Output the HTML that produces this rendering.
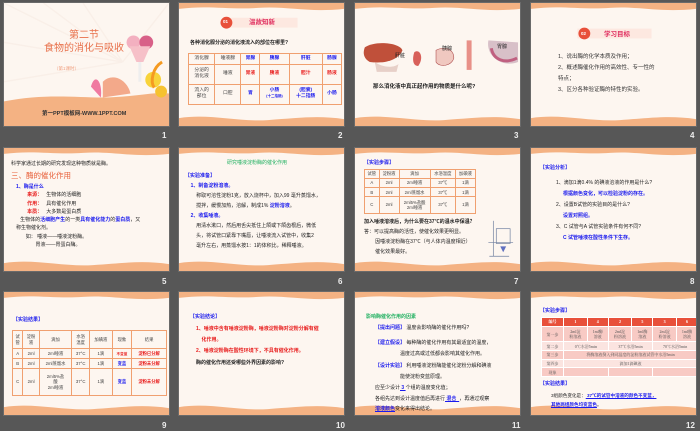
<!DOCTYPE html>
<html><head><meta charset="utf-8">
<style>
*{margin:0;padding:0;box-sizing:border-box}
body{width:700px;height:431px;background:#575757;position:relative;overflow:hidden;font-family:"Liberation Sans","Noto Sans CJK SC",sans-serif;}
.s{position:absolute;width:167px;height:125px;background:#fdf6f0;overflow:hidden;border:1px solid #6a6a6a}
.s svg.bg{position:absolute;left:0;top:0;width:100%;height:100%}
.n{position:absolute;color:#eee;font-size:8px;font-weight:bold}
.t{position:absolute;font-size:5.5px;line-height:1.5;color:#222;white-space:nowrap}
.b{color:#1a1aee;font-weight:bold}
.r{color:#e81c1c;font-weight:bold}
table{position:absolute;border-collapse:collapse;font-size:4.8px;text-align:center;color:#444}
td{border:1px solid #f0a070;padding:0 1px;line-height:1.25}
</style></head><body>

<!-- Row 1 -->
<div class="s" style="left:3px;top:2px">
<svg class="bg" viewBox="0 0 167 125" preserveAspectRatio="none">
<g stroke="#f8ece4" stroke-width="1.5" opacity=".6"><line x1="120" y1="60" x2="0" y2="0"/><line x1="120" y1="60" x2="40" y2="0"/><line x1="120" y1="60" x2="80" y2="0"/><line x1="120" y1="60" x2="0" y2="40"/><line x1="120" y1="60" x2="0" y2="80"/><line x1="120" y1="60" x2="167" y2="0"/></g>
<path d="M0 100 C40 92 70 96 100 96 C130 96 150 90 167 92 V125 H0Z" fill="#f4b283"/>
<path d="M88 85 C92 70 100 80 98 96 Z" fill="#f07aa0"/>
<path d="M100 80 C110 70 125 78 128 92 L100 96Z" fill="#f3a98a"/>
<circle cx="151" cy="78" r="8" fill="#f8d33a"/><circle cx="159" cy="90" r="6" fill="#f6c230"/>
<path d="M160 60 C150 66 148 80 152 86" stroke="#f59a20" stroke-width="3" fill="none"/>
<circle cx="131" cy="40" r="7" fill="#f3b0c0"/><circle cx="144" cy="40" r="7" fill="#d86088"/>
<path d="M127 44 L148 44 L141 60 L134 60Z" fill="#f6c0c8"/>
<rect x="136" y="60" width="3" height="20" fill="#eee"/>
</svg>
<div class="t" style="left:40px;top:26px;font-size:10px;color:#e8704a;line-height:1.3;text-align:center">第二节<br>食物的消化与吸收</div>
<div class="t" style="left:50px;top:63px;font-size:4.5px;color:#f0a080">（第1课时）</div>
<div class="t" style="left:38px;top:107px;font-size:5.5px;font-weight:bold;color:#333">第一PPT模板网-WWW.1PPT.COM</div>
</div>
<div class="n" style="left:162px;top:131px">1</div>

<div class="s" style="left:178px;top:2px">
<svg class="bg" viewBox="0 0 167 125" preserveAspectRatio="none"><path d="M0 0H167V6C130 10 110 3 80 5C50 7 30 2 0 6Z" fill="#f4b283"/><path d="M0 125V117C30 112 60 121 90 119C120 117 140 114 167 118V125Z" fill="#f4b283"/>
<rect x="45" y="15" width="75" height="10" fill="#fde8e0"/><circle cx="48" cy="20" r="6" fill="#e8503a"/></svg>
<div class="t" style="left:44px;top:16px;font-size:4.5px;color:#fff;font-weight:bold">01</div>
<div class="t" style="left:70px;top:15px;font-size:6.5px;color:#e03060;font-weight:bold">温故知新</div>
<div class="t" style="left:11px;top:37px;font-size:5px;font-weight:bold">各种消化腺分泌的消化液流入的部位在哪里?</div>
<table style="left:9px;top:50px;width:154px;height:52px">
<tr><td>消化腺</td><td>唾液腺</td><td class="b">胃腺</td><td class="b">胰腺</td><td class="b">肝脏</td><td class="b">肠腺</td></tr>
<tr><td>分泌的<br>消化液</td><td>唾液</td><td class="r">胃液</td><td class="r">胰液</td><td class="r">胆汁</td><td class="r">肠液</td></tr>
<tr><td>流入的<br>部位</td><td>口腔</td><td class="b">胃</td><td class="b">小肠<br><span style="font-size:3.5px">(十二指肠)</span></td><td class="b">(胆囊)<br>十二指肠</td><td class="b">小肠</td></tr>
</table>
</div>
<div class="n" style="left:338px;top:131px">2</div>

<div class="s" style="left:354px;top:2px">
<svg class="bg" viewBox="0 0 167 125" preserveAspectRatio="none"><path d="M0 0H167V6C130 10 110 3 80 5C50 7 30 2 0 6Z" fill="#f4b283"/><path d="M0 125V117C30 112 60 121 90 119C120 117 140 114 167 118V125Z" fill="#f4b283"/>
<path d="M10 45 C20 38 45 40 48 48 C44 58 30 62 15 60 C8 56 8 50 10 45Z" fill="#c0503a"/>
<path d="M20 60 C28 66 40 66 44 62 L42 70 L22 70Z" fill="#e7d0c8"/>
<path d="M60 50 C66 46 70 56 64 64 C58 64 58 56 60 50Z" fill="#d8605a"/>
<path d="M82 48 C90 44 100 46 100 56 C98 64 86 66 82 60Z" fill="#f0c8c0" stroke="#b05050" stroke-width=".6"/>
<rect x="113" y="38" width="5" height="30" fill="#e89088"/>
<path d="M135 38 C132 55 150 66 165 60 L165 40 Z" fill="#d8c0c8"/>
<path d="M138 46 C140 58 152 62 164 56" stroke="#c06080" stroke-width="3" fill="none"/>
</svg>
<div class="t" style="left:40px;top:50px;font-size:5px">肝脏</div>
<div class="t" style="left:87px;top:43px;font-size:5px">胰腺</div>
<div class="t" style="left:142px;top:41px;font-size:5px">胃腺</div>
<div class="t" style="left:18px;top:80px;font-size:5.5px;font-weight:bold">那么消化液中真正起作用的物质是什么呢?</div>
</div>
<div class="n" style="left:514px;top:131px">3</div>

<div class="s" style="left:530px;top:2px">
<svg class="bg" viewBox="0 0 167 125" preserveAspectRatio="none"><path d="M0 0H167V6C130 10 110 3 80 5C50 7 30 2 0 6Z" fill="#f4b283"/><path d="M0 125V117C30 112 60 121 90 119C120 117 140 114 167 118V125Z" fill="#f4b283"/>
<rect x="47" y="26" width="75" height="10" fill="#fde8e0"/><circle cx="54" cy="31" r="6" fill="#e8503a"/></svg>
<div class="t" style="left:50px;top:28px;font-size:4.5px;color:#fff;font-weight:bold">02</div>
<div class="t" style="left:73px;top:27px;font-size:6.5px;color:#e03060;font-weight:bold">学习目标</div>
<div class="t" style="left:27px;top:49px;font-size:5.5px;line-height:11px;color:#333">1、说出酶的化学本质及作用；<br>2、概述酶催化作用的高效性、专一性的<br>特点；<br>3、区分各种验证酶的特性的实验。</div>
</div>
<div class="n" style="left:690px;top:131px">4</div>

<!-- Row 2 -->
<div class="s" style="left:3px;top:147px">
<svg class="bg" viewBox="0 0 167 125" preserveAspectRatio="none"><path d="M0 0H167V6C130 10 110 3 80 5C50 7 30 2 0 6Z" fill="#f4b283"/><path d="M0 125V117C30 112 60 121 90 119C120 117 140 114 167 118V125Z" fill="#f4b283"/></svg>
<div class="t" style="left:7px;top:13px;font-size:5px">科学家通过长期的研究发现这种物质就是酶。</div>
<div class="t" style="left:7px;top:22px;font-size:7.5px;color:#e8603a">三、酶的催化作用</div>
<div class="t" style="left:12px;top:35px;font-size:5px;line-height:8.3px"><span class="b">1、酶是什么</span><br>
&nbsp;&nbsp;&nbsp;&nbsp;&nbsp;&nbsp;&nbsp;&nbsp;<span class="r">来源：</span>&nbsp;&nbsp;&nbsp;生物体的活细胞<br>
&nbsp;&nbsp;&nbsp;&nbsp;&nbsp;&nbsp;&nbsp;&nbsp;<span class="r">作用：</span>&nbsp;&nbsp;&nbsp;具有催化作用<br>
&nbsp;&nbsp;&nbsp;&nbsp;&nbsp;&nbsp;&nbsp;&nbsp;<span class="r">本质：</span>&nbsp;&nbsp;&nbsp;大多数是蛋白质<br>
&nbsp;&nbsp;&nbsp;生物体的<span class="b">活细胞产生</span>的一类<span class="b">具有催化能力</span>的<span class="b">蛋白质</span>，又<br>称生物催化剂。<br>
&nbsp;&nbsp;&nbsp;&nbsp;&nbsp;&nbsp;&nbsp;如：&nbsp;唾液——唾液淀粉酶。<br>
&nbsp;&nbsp;&nbsp;&nbsp;&nbsp;&nbsp;&nbsp;&nbsp;&nbsp;&nbsp;&nbsp;&nbsp;&nbsp;&nbsp;胃液——胃蛋白酶。</div>
</div>
<div class="n" style="left:162px;top:277px">5</div>

<div class="s" style="left:178px;top:147px">
<svg class="bg" viewBox="0 0 167 125" preserveAspectRatio="none"><path d="M0 0H167V6C130 10 110 3 80 5C50 7 30 2 0 6Z" fill="#f4b283"/><path d="M0 125V117C30 112 60 121 90 119C120 117 140 114 167 118V125Z" fill="#f4b283"/></svg>
<div class="t" style="left:48px;top:12px;font-size:5px;color:#20b060">研究唾液淀粉酶的催化作用</div>
<div class="t" style="left:6px;top:23px;font-size:5px;line-height:10px"><span class="b">【实验准备】</span><br>
&nbsp;&nbsp;&nbsp;&nbsp;<span class="b">1、制备淀粉溶液。</span><br>
&nbsp;&nbsp;&nbsp;&nbsp;&nbsp;&nbsp;&nbsp;&nbsp;称取可溶性淀粉1克，放入烧杯中，加入99 毫升蒸馏水，<br>
&nbsp;&nbsp;&nbsp;&nbsp;&nbsp;&nbsp;&nbsp;&nbsp;搅拌，缓慢加热，溶解，制成1% <span class="b">淀粉溶液</span>。<br>
&nbsp;&nbsp;&nbsp;&nbsp;<span class="b">2、收集唾液。</span><br>
&nbsp;&nbsp;&nbsp;&nbsp;&nbsp;&nbsp;&nbsp;&nbsp;用清水漱口，然后用舌尖抵住上颌或下颌齿根后，微低<br>
&nbsp;&nbsp;&nbsp;&nbsp;&nbsp;&nbsp;&nbsp;&nbsp;头，将试管口紧靠下嘴唇，让唾液流入试管中，收集2<br>
&nbsp;&nbsp;&nbsp;&nbsp;&nbsp;&nbsp;&nbsp;&nbsp;毫升左右，用蒸馏水按1：1的体积比，稀释唾液。</div>
</div>
<div class="n" style="left:338px;top:277px">6</div>

<div class="s" style="left:354px;top:147px">
<svg class="bg" viewBox="0 0 167 125" preserveAspectRatio="none"><path d="M0 0H167V6C130 10 110 3 80 5C50 7 30 2 0 6Z" fill="#f4b283"/><path d="M0 125V117C30 112 60 121 90 119C120 117 140 114 167 118V125Z" fill="#f4b283"/>
<g stroke="#7080a0" stroke-width=".7" fill="none"><line x1="140" y1="74" x2="140" y2="110"/><line x1="136" y1="110" x2="156" y2="110"/><rect x="143" y="82" width="14" height="15"/><line x1="135" y1="96" x2="160" y2="96"/></g><path d="M147 100 l3 6 l3 -6z" fill="#6070c0"/></svg>
<div class="t b" style="left:9px;top:12px;font-size:5px">【实验步骤】</div>
<table style="left:9px;top:21px;width:112px;height:45px;font-size:4.3px"><tr><td>试管</td><td>淀粉液</td><td>滴加</td><td>水浴温度</td><td>加碘液</td></tr>
<tr><td>A</td><td>2ml</td><td>2ml唾液</td><td>37℃</td><td>1滴</td></tr>
<tr><td>B</td><td>2ml</td><td>2ml蒸馏水</td><td>37℃</td><td>1滴</td></tr>
<tr><td>C</td><td>2ml</td><td>2ml5%盐酸<br>2ml唾液</td><td>37℃</td><td>1滴</td></tr></table>
<div class="t" style="left:9px;top:69px;font-size:5px;line-height:10px"><b>加入唾液溶液后，为什么要在37℃的温水中保温？</b><br>答：可以提高酶的活性，使催化效果更明显。<br>&nbsp;&nbsp;&nbsp;&nbsp;&nbsp;&nbsp;&nbsp;&nbsp;因唾液淀粉酶在37℃（与人体内温度相近）<br>&nbsp;&nbsp;&nbsp;&nbsp;&nbsp;&nbsp;&nbsp;&nbsp;催化效果最好。</div>
</div>
<div class="n" style="left:514px;top:277px">7</div>

<div class="s" style="left:530px;top:147px">
<svg class="bg" viewBox="0 0 167 125" preserveAspectRatio="none"><path d="M0 0H167V6C130 10 110 3 80 5C50 7 30 2 0 6Z" fill="#f4b283"/><path d="M0 125V117C30 112 60 121 90 119C120 117 140 114 167 118V125Z" fill="#f4b283"/></svg>
<div class="t b" style="left:9px;top:17px;font-size:5px">【实验分析】</div>
<div class="t" style="left:25px;top:30px;font-size:5px;line-height:11px">1、滴加1滴0.4% 的碘液溶液的作用是什么?<br>&nbsp;&nbsp;&nbsp;&nbsp;&nbsp;<span class="b">根据颜色变化，可以检验淀粉的存在。</span><br>2、设置B试管的实验目的是什么?<br>&nbsp;&nbsp;&nbsp;&nbsp;&nbsp;<span class="b">设置对照组。</span><br>3、C 试管与A 试管实验条件有何不同?<br>&nbsp;&nbsp;&nbsp;&nbsp;&nbsp;<span class="b">C 试管唾液在酸性条件下生存。</span></div>
</div>
<div class="n" style="left:690px;top:277px">8</div>

<!-- Row 3 -->
<div class="s" style="left:3px;top:291px">
<svg class="bg" viewBox="0 0 167 125" preserveAspectRatio="none"><path d="M0 0H167V6C130 10 110 3 80 5C50 7 30 2 0 6Z" fill="#f4b283"/><path d="M0 125V117C30 112 60 121 90 119C120 117 140 114 167 118V125Z" fill="#f4b283"/></svg>
<div class="t b" style="left:9px;top:25px;font-size:5px">【实验结果】</div>
<table style="left:8px;top:38px;width:155px;height:66px;font-size:4.3px"><tr><td>试<br>管</td><td>淀粉<br>液</td><td>滴加</td><td>水浴<br>温度</td><td>加碘液</td><td>现象</td><td>结果</td></tr>
<tr><td>A</td><td>2ml</td><td>2ml唾液</td><td>37°C</td><td>1滴</td><td class="r" style="font-size:3.6px">不变蓝</td><td class="r">淀粉已分解</td></tr>
<tr><td>B</td><td>2ml</td><td>2ml蒸馏水</td><td>37°C</td><td>1滴</td><td class="b">变蓝</td><td class="r">淀粉未分解</td></tr>
<tr><td>C</td><td>2ml</td><td>2ml5%盐<br>酸<br>2ml唾液</td><td>37°C</td><td>1滴</td><td class="b">变蓝</td><td class="r">淀粉未分解</td></tr></table>
</div>
<div class="n" style="left:162px;top:421px">9</div>

<div class="s" style="left:178px;top:291px">
<svg class="bg" viewBox="0 0 167 125" preserveAspectRatio="none"><path d="M0 0H167V6C130 10 110 3 80 5C50 7 30 2 0 6Z" fill="#f4b283"/><path d="M0 125V117C30 112 60 121 90 119C120 117 140 114 167 118V125Z" fill="#f4b283"/></svg>
<div class="t b" style="left:11px;top:22px;font-size:5px">【实验结论】</div>
<div class="t r" style="left:17px;top:32px;font-size:5px;line-height:11px">1、唾液中含有唾液淀粉酶，唾液淀粉酶对淀粉分解有催<br>&nbsp;&nbsp;&nbsp;&nbsp;化作用。<br>2、唾液淀粉酶在酸性环境下，不具有催化作用。</div>
<div class="t" style="left:17px;top:68px;font-size:5px;font-weight:bold">酶的催化作用还受哪些外界因素的影响?</div>
</div>
<div class="n" style="left:336px;top:421px">10</div>

<div class="s" style="left:354px;top:291px">
<svg class="bg" viewBox="0 0 167 125" preserveAspectRatio="none"><path d="M0 0H167V6C130 10 110 3 80 5C50 7 30 2 0 6Z" fill="#f4b283"/><path d="M0 125V117C30 112 60 121 90 119C120 117 140 114 167 118V125Z" fill="#f4b283"/></svg>
<div class="t" style="left:11px;top:22px;font-size:5px;color:#20b060;font-weight:bold">影响酶催化作用的因素</div>
<div class="t" style="left:20px;top:33px;font-size:5px"><span class="b">【提出问题】</span> 温度会影响酶的催化作用吗?</div>
<div class="t" style="left:20px;top:46px;font-size:5px;line-height:10.5px"><span class="b">【建立假设】</span> 每种酶的催化作用有其最适宜的温度，<br>&nbsp;&nbsp;&nbsp;&nbsp;&nbsp;&nbsp;&nbsp;&nbsp;&nbsp;&nbsp;&nbsp;&nbsp;&nbsp;&nbsp;&nbsp;&nbsp;&nbsp;&nbsp;温度过高或过低都会影响其催化作用。</div>
<div class="t" style="left:20px;top:69px;font-size:5px;line-height:10.5px"><span class="b">【设计实验】</span> 利用唾液淀粉酶能催化淀粉分解和碘液<br>&nbsp;&nbsp;&nbsp;&nbsp;&nbsp;&nbsp;&nbsp;&nbsp;&nbsp;&nbsp;&nbsp;&nbsp;&nbsp;&nbsp;&nbsp;&nbsp;&nbsp;&nbsp;能使淀粉变蓝原理。</div>
<div class="t" style="left:20px;top:91px;font-size:5px;line-height:10.5px">应至少设计<u class="b">&nbsp;3&nbsp;</u>个组的温度变化值；<br>各组先达到设计温度值后再进行<u class="b">&nbsp;混合&nbsp;&nbsp;</u>，再通过观察<br><u class="b">溶液颜色</u>变化来得出结论。</div>
</div>
<div class="n" style="left:512px;top:421px">11</div>

<div class="s" style="left:530px;top:291px">
<svg class="bg" viewBox="0 0 167 125" preserveAspectRatio="none"><path d="M0 0H167V6C130 10 110 3 80 5C50 7 30 2 0 6Z" fill="#f4b283"/><path d="M0 125V117C30 112 60 121 90 119C120 117 140 114 167 118V125Z" fill="#f4b283"/></svg>
<div class="t b" style="left:9px;top:16px;font-size:5px">【实验步骤】</div>
<table style="left:10px;top:25px;width:157px;height:60px;font-size:4px;color:#555;font-family:'Liberation Serif','Noto Serif CJK SC',serif">
<tr style="background:#e8503a;color:#fff;font-weight:bold"><td style="border-color:#fff">编号</td><td style="border-color:#fff">1</td><td style="border-color:#fff">4</td><td style="border-color:#fff">2</td><td style="border-color:#fff">5</td><td style="border-color:#fff">3</td><td style="border-color:#fff">6</td></tr>
<tr style="background:#f8cac4"><td style="border-color:#fff">第一步</td><td style="border-color:#fff">2ml淀<br>粉溶液</td><td style="border-color:#fff">1ml酶<br>溶液</td><td style="border-color:#fff">2ml淀<br>粉溶液</td><td style="border-color:#fff">1ml酶<br>溶液</td><td style="border-color:#fff">2ml淀<br>粉溶液</td><td style="border-color:#fff">1ml酶<br>溶液</td></tr>
<tr style="background:#fbe4e0"><td style="border-color:#fff">第二步</td><td colspan="2" style="border-color:#fff">0℃水浴5min</td><td colspan="2" style="border-color:#fff">37℃水浴5min</td><td colspan="2" style="border-color:#fff">70℃水浴5min</td></tr>
<tr style="background:#f8cac4"><td style="border-color:#fff">第三步</td><td colspan="6" style="border-color:#fff">将酶溶液倒入到同温度的淀粉溶液试管中水浴5min</td></tr>
<tr style="background:#fbe4e0"><td style="border-color:#fff">第四步</td><td colspan="6" style="border-color:#fff">滴加1滴碘液</td></tr>
<tr style="background:#f8cac4"><td style="border-color:#fff">现象</td><td colspan="2" style="border-color:#fff"></td><td colspan="2" style="border-color:#fff"></td><td colspan="2" style="border-color:#fff"></td></tr></table>
<div class="t b" style="left:9px;top:89px;font-size:5px">【实验结果】</div>
<div class="t" style="left:20px;top:99px;font-size:4.6px;line-height:9px">3组颜色变化是：<u class="b">&nbsp;37℃的试管中溶液的颜色不变蓝，</u><br><u class="b">其他两组颜色均变蓝色</u>。</div>
</div>
<div class="n" style="left:686px;top:421px">12</div>

</body></html>
